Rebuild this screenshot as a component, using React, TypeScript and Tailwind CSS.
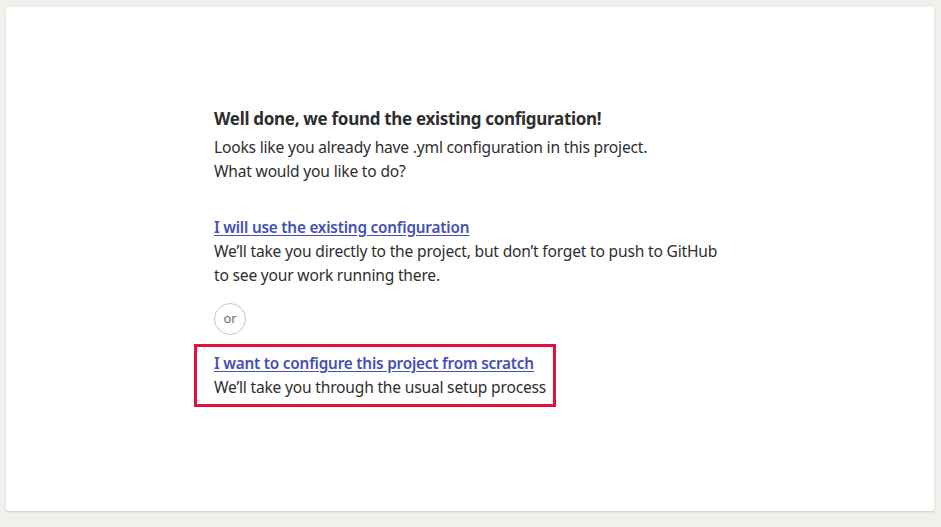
export default function App() {
  return (
    <div className="min-h-[527px] w-full bg-[#f1f0ec] pt-[7px] pl-[6px] pr-[7px] pb-[16px]" style={{ fontFamily: '"Noto Sans", "Open Sans", sans-serif' }}>
      <div className="h-[504px] w-[928px] rounded-[3px] bg-white shadow-[0_1px_2px_rgba(0,0,0,0.18)] pt-[100px]">
        <div className="mx-auto w-[512px] text-[#2e2e2e]">
          <h1 className="text-[17px] font-bold leading-[24px] tracking-[-0.3px]">Well done, we found the existing configuration!</h1>
          <p className="mt-[4px] text-[15.6px] leading-[24px] tracking-[-0.2px]">
            Looks like you already have .yml configuration in this project.
            <br />
            What would you like to do?
          </p>
          <div className="mt-[32px] text-[15.6px] leading-[24px] tracking-[-0.2px]">
            <a href="#" className="text-[15.3px] font-semibold text-[#4450b5] underline underline-offset-2">I will use the existing configuration</a>
            <p>
              We’ll take you directly to the project, but don’t forget to push to GitHub
              <br />
              to see your work running there.
            </p>
          </div>
          <div className="mt-[16px] flex h-[32px] w-[32px] items-center justify-center rounded-full border border-[#c8c8c8] text-[13px] text-[#6b6b6b]">or</div>
          <div className="mt-[9px] -ml-[20px] w-[362px] border-[3px] border-[#e3103c] pl-[17px] pt-[4px] pb-[5px] text-[15.6px] leading-[24px] tracking-[-0.2px]">
            <a href="#" className="text-[15.3px] font-semibold text-[#4450b5] underline underline-offset-2">I want to configure this project from scratch</a>
            <p>We’ll take you through the usual setup process</p>
          </div>
        </div>
      </div>
    </div>
  );
}
